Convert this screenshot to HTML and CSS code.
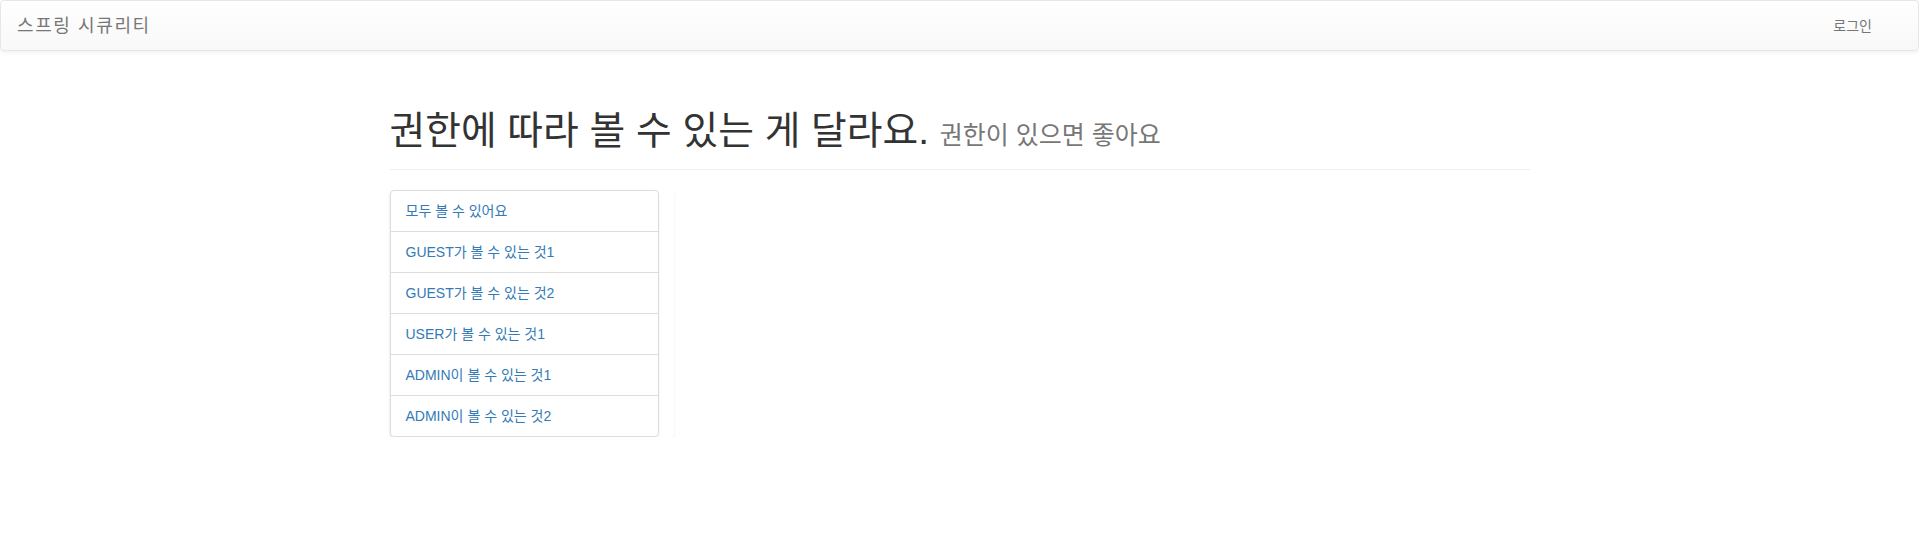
FILE: index.html
```html
<!DOCTYPE html>
<html lang="ko">
<head>
<meta charset="utf-8">
<title>스프링 시큐리티</title>
<link rel="stylesheet" href="styles.css">
</head>
<body>
<nav class="navbar">
  <a class="brand" href="#">스프링 시큐리티</a>
  <a class="nav-link" href="#">로그인</a>
</nav>
<main class="container">
  <div class="page-header">
    <h1>권한에 따라 볼 수 있는 게 달라요. <small class="title-sub">권한이 있으면 좋아요</small></h1>
  </div>
  <div class="menu-col">
    <div class="list-group">
      <a class="list-group-item" href="#">모두 볼 수 있어요</a>
      <a class="list-group-item" href="#">GUEST가 볼 수 있는 것1</a>
      <a class="list-group-item" href="#">GUEST가 볼 수 있는 것2</a>
      <a class="list-group-item" href="#">USER가 볼 수 있는 것1</a>
      <a class="list-group-item" href="#">ADMIN이 볼 수 있는 것1</a>
      <a class="list-group-item" href="#">ADMIN이 볼 수 있는 것2</a>
    </div>
  </div>
</main>
</body>
</html>
```
FILE: styles.css
```css
* { box-sizing: border-box; }
html, body { margin: 0; padding: 0; }
body {
  font-family: "Liberation Sans", "Noto Sans CJK KR", sans-serif;
  font-size: 14px;
  line-height: 20px;
  color: #333;
  background: #fff;
}
a { text-decoration: none; }

.navbar {
  height: 51px;
  display: flex;
  align-items: center;
  justify-content: space-between;
  padding: 0 46px 0 16px;
  background-image: linear-gradient(to bottom, #fff 0, #f8f8f8 100%);
  border: 1px solid #e7e7e7;
  border-radius: 4px;
  box-shadow: inset 0 1px 0 rgba(255,255,255,.15), 0 1px 5px rgba(0,0,0,.075);
}
.brand {
  color: #777;
  font-size: 18px;
  line-height: 20px;
  letter-spacing: 1.6px;
}
.nav-link {
  color: #777;
  font-size: 14px;
  line-height: 20px;
}

.container {
  width: 1170px;
  margin: 0 auto;
  padding: 0 15px;
}
.page-header {
  padding: 60px 0 18px;
  border-bottom: 1px solid #eee;
}
h1 {
  margin: 0;
  font-size: 38.8px;
  line-height: 40px;
  font-weight: 400;
  color: #333;
  white-space: nowrap;
}
.title-sub {
  font-size: 25px;
  font-weight: 400;
  color: #777;
  line-height: 1;
}

.menu-col {
  margin-top: 20px;
  width: 284px;
  border-radius: 4px;
  box-shadow: 0 1px 3px rgba(0,0,0,.08);
}
.list-group {
  width: 269px;
  border-radius: 4px;
  box-shadow: 0 1px 2px rgba(0,0,0,.075);
}
.list-group-item {
  display: block;
  padding: 10px 15px;
  color: #337ab7;
  font-size: 14px;
  line-height: 20px;
  border: 1px solid #ddd;
  margin-bottom: -1px;
  background: #fff;
}
.list-group-item:first-child { border-radius: 4px 4px 0 0; }
.list-group-item:last-child { border-radius: 0 0 4px 4px; margin-bottom: 0; }
```
